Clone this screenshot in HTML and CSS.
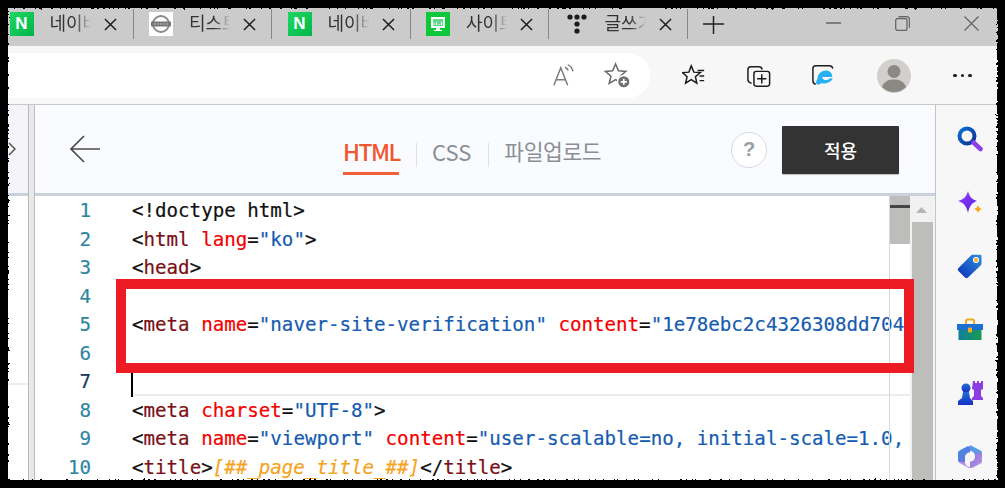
FILE: index.html
```html
<!doctype html>
<html lang="ko">
<head>
<meta charset="UTF-8">
<title>HTML editor</title>
<link rel="stylesheet" href="styles.css">
</head>
<body>
<svg class="defs" width="0" height="0" aria-hidden="true">
  <filter id="torn" x="-2%" y="-2%" width="104%" height="104%">
    <feTurbulence type="fractalNoise" baseFrequency="0.35" numOctaves="2" seed="4"/>
    <feDisplacementMap in="SourceGraphic" scale="5"/>
  </filter>
  <linearGradient id="mag" x1="0" y1="0" x2="1" y2="1"><stop offset="0" stop-color="#0a6fd8"/><stop offset="1" stop-color="#12308f"/></linearGradient>
  <linearGradient id="spark" x1="0" y1="0" x2="1" y2="1"><stop offset="0" stop-color="#a13cf5"/><stop offset="1" stop-color="#4a22e0"/></linearGradient>
  <linearGradient id="tag" x1="1" y1="0" x2="0" y2="1"><stop offset="0" stop-color="#2f8fe0"/><stop offset="1" stop-color="#0b2fb5"/></linearGradient>
  <linearGradient id="box" x1="0" y1="0" x2="1" y2="0"><stop offset="0" stop-color="#0f7f9a"/><stop offset="1" stop-color="#1c9a55"/></linearGradient>
  <linearGradient id="pawn" x1="0" y1="0" x2="0" y2="1"><stop offset="0" stop-color="#1f6fd0"/><stop offset="1" stop-color="#1a2fc8"/></linearGradient>
  <linearGradient id="cop1" x1="0" y1="0" x2="1" y2="1"><stop offset="0" stop-color="#3f8ee0"/><stop offset="1" stop-color="#6f6fe0"/></linearGradient>
  <linearGradient id="cop2" x1="0" y1="0" x2="1" y2="1"><stop offset="0" stop-color="#7d7be0"/><stop offset="1" stop-color="#c58be0"/></linearGradient>
</svg>
<div class="window">
  <div class="tabs">
    <div class="tab first">
      <span class="fav naver">N</span><span class="tab-title">네이버</span>
      <svg class="close" viewBox="0 0 14 14"><path d="M1 1l12 12M13 1L1 13"/></svg>
    </div>
    <div class="tab">
      <span class="fav plain"><svg viewBox="0 0 24 24" width="24" height="24"><circle cx="12" cy="12" r="8" fill="none" stroke="#8a8a8a" stroke-width="2"/><rect x="2" y="9.500" width="20" height="5" rx="1" fill="#777"/><path d="M5 12h14" stroke="#bbb" stroke-width="1" stroke-dasharray="2 1"/></svg></span><span class="tab-title">티스토리</span>
      <svg class="close" viewBox="0 0 14 14"><path d="M1 1l12 12M13 1L1 13"/></svg>
    </div>
    <div class="tab">
      <span class="fav naver">N</span><span class="tab-title">네이버</span>
      <svg class="close" viewBox="0 0 14 14"><path d="M1 1l12 12M13 1L1 13"/></svg>
    </div>
    <div class="tab">
      <span class="fav site"><svg viewBox="0 0 24 24" width="24" height="24"><rect x="5" y="5" width="14" height="11" fill="#fff"/><rect x="7" y="7" width="10" height="7" fill="#5fd98a"/><path d="M8 13v-2M10.500 13v-3M13 13v-1M15.500 13v-3" stroke="#fff" stroke-width="1"/><path d="M10 16h4v2h2v1H8v-1h2z" fill="#fff"/></svg></span><span class="tab-title">사이트</span>
      <svg class="close" viewBox="0 0 14 14"><path d="M1 1l12 12M13 1L1 13"/></svg>
    </div>
    <div class="tab">
      <span class="fav bare"><svg viewBox="0 0 24 24" width="24" height="24" fill="#1c1c1c"><circle cx="5" cy="5" r="2.600"/><circle cx="12" cy="5" r="2.600"/><circle cx="19" cy="5" r="2.600"/><circle cx="12" cy="12" r="2.600"/><circle cx="12" cy="19" r="2.600"/></svg></span><span class="tab-title">글쓰기</span>
      <svg class="close" viewBox="0 0 14 14"><path d="M1 1l12 12M13 1L1 13"/></svg>
    </div>
    <svg class="newtab" viewBox="0 0 21 18"><path d="M10.500 0v18M0 8h21"/></svg>
    <div class="winctl">
      <svg viewBox="0 0 15 15"><path d="M0 7h15"/></svg>
      <svg viewBox="0 0 15 15"><rect x=".7" y="2.500" width="11.300" height="12" rx="2"/><path d="M3.500.7h8a3 3 0 0 1 3 3v8"/></svg>
      <svg viewBox="0 0 15 15"><path d="M.5.500l14 14M14.500.500l-14 14"/></svg>
    </div>
  </div>
  <div class="toolbar">
    <div class="omnibox">
      <svg class="tool readaloud" viewBox="0 0 26 26"><path d="M2 23L9.500 4 17 23M4.800 17h9.500"/><path d="M14 3.500c2 .8 3 2 3.500 3.500M17 1c3 1 5 3.500 5.500 7"/></svg>
      <svg class="tool fav-add" viewBox="0 0 28 28"><path d="M12 2l3 7.200 7.600.6-5.800 5 1.800 7.500L12 18.300l-6.600 4 1.800-7.500-5.800-5 7.600-.6z"/><circle class="badge" cx="20.500" cy="20.500" r="6.500"/><path class="badge-plus" d="M20.500 17.300v6.400M17.300 20.500h6.400"/></svg>
    </div>
    <div class="tools">
      <svg class="tool favs" viewBox="0 0 26 26"><path d="M10 2l2.800 6.800 7 .5-5.300 4.500 1.600 7L10 17l-6.100 3.800 1.600-7L.5 9.300l7-.5z"/><path d="M17 7h7M19 13h5M19 18h5"/></svg>
      <svg class="tool colls" viewBox="0 0 26 26"><path d="M5 21C2 20 1 19 1 17V6c0-2 1-3 3-3h9c2 0 3 1 3.500 3"/><rect x="7.500" y="8" width="17" height="16" rx="2.500"/><path d="M16 11v10M11 16h10"/></svg>
      <svg class="tool ie" viewBox="0 0 26 26"><path d="M4 22c-2-.5-3-1.500-3-3.500V5c0-2 1-3 3-3h15c2 0 3 1 3.500 3"/><path class="ie-e" d="M6 16c0-5 4-9 9-9 4 0 7 2.500 7 7H11c.5 4 6 4.500 8.500 1.500h3c-2 5-8 6.500-12 5-1.500 1.500-5 2.500-6 .5-.5-1.500.5-3 1.500-5M11.500 11.500c1-2.500 6-2.500 7 0z"/></svg>
      <span class="avatar"><svg viewBox="0 0 34 34" width="34" height="34"><circle cx="17" cy="12.500" r="6.500" fill="#8c8984"/><path d="M5 28c2-6 7-7.500 12-7.500S27 22 29 28c-3 3-7 5-12 5S8 31 5 28z" fill="#8c8984"/></svg></span>
      <span class="more"><i></i><i></i><i></i></span>
    </div>
  </div>
  <div class="page">
    <aside class="left">
      <div class="left-head"><svg viewBox="0 0 8 14" width="8" height="14"><path d="M1 1l6 6-6 6"/></svg></div>
    </aside>
    <main class="editor">
      <header class="head">
        <svg class="back" viewBox="0 0 30 28"><path d="M30 14H1M14 1L1 14l13 13"/></svg>
        <nav class="modes">
          <a class="mode on">HTML</a><a class="mode">CSS</a><a class="mode upload">파일업로드</a>
        </nav>
        <span class="help">?</span>
        <button class="apply">적용</button>
      </header>
      <div class="body">
        <div class="code">
          <div class="line"><span class="num">1</span><span class="src">&lt;!doctype html&gt;</span></div>
          <div class="line"><span class="num">2</span><span class="src">&lt;<b>html</b> <u>lang</u>=<s>"ko"</s>&gt;</span></div>
          <div class="line"><span class="num">3</span><span class="src">&lt;<b>head</b>&gt;</span></div>
          <div class="line"><span class="num">4</span><span class="src"></span></div>
          <div class="line"><span class="num">5</span><span class="src">&lt;<b>meta</b> <u>name</u>=<s>"naver-site-verification"</s> <u>content</u>=<s>"1e78ebc2c4326308dd704f6a2b"</s></span></div>
          <div class="line"><span class="num">6</span><span class="src"></span></div>
          <div class="line current"><span class="num">7</span><span class="src"><em class="caret"></em></span></div>
          <div class="line"><span class="num">8</span><span class="src">&lt;<b>meta</b> <u>charset</u>=<s>"UTF-8"</s>&gt;</span></div>
          <div class="line"><span class="num">9</span><span class="src">&lt;<b>meta</b> <u>name</u>=<s>"viewport"</s> <u>content</u>=<s>"user-scalable=no, initial-scale=1.0, maximum-scale=1.0"</s>&gt;</span></div>
          <div class="line"><span class="num">10</span><span class="src">&lt;<b>title</b>&gt;<i>[##_page_title_##]</i>&lt;/<b>title</b>&gt;</span></div>
        </div>
        <div class="ruler"><span class="ruler-mark"></span></div>
        <div class="scroll"><span class="arrow"></span><span class="thumb"></span></div>
        <div class="callout"></div>
      </div>
    </main>
    <aside class="side">
      <svg viewBox="0 0 26 26"><circle cx="10" cy="10" r="7.500" fill="none" stroke="url(#mag)" stroke-width="4"/><path d="M16.500 16.500l7 6.500" stroke="#8a3fe8" stroke-width="4.500" stroke-linecap="round"/></svg>
      <svg viewBox="0 0 26 26"><path d="M11 1c1.500 6 3.500 8 9 10-5.500 2-7.500 5-9 12C9.500 16 7 13 1 11c6-2 8.500-4 10-10z" fill="url(#spark)"/><path d="M21 15c.5 2 1.500 3 4 4-2.500 1-3.500 2-4 4-.5-2-1.500-3-4-4 2.500-1 3.500-2 4-4z" fill="#f5a81c"/></svg>
      <svg viewBox="0 0 26 26"><path d="M1.500 15L14 2.500c.5-.5 1-.7 2-.7h7c1 0 1.500.5 1.500 1.500v7c0 1-.2 1.500-.7 2L11 24.500c-1 1-2 1-3 0L1.500 18c-1-1-1-2 0-3z" fill="url(#tag)"/><circle cx="19" cy="7" r="3" fill="#fff"/><circle cx="19" cy="7" r="2" fill="#f5b021"/></svg>
      <svg viewBox="0 0 26 26"><path d="M9 7V4c0-1 .5-1.500 1.500-1.500h5C16.500 2.500 17 3 17 4v3" fill="none" stroke="#f0a91e" stroke-width="2"/><path d="M0 7h26v6H0z" fill="#1b6fd0"/><path d="M1.500 13h23v10h-23z" fill="url(#box)"/><rect x="11" y="10.500" width="4" height="5" rx="1" fill="#f5a81c"/></svg>
      <svg viewBox="0 0 26 26"><path d="M16 1h2v2h2V1h2v2h2V1h2v8l-2 1v6l2 2v2H15v-2l2-2v-6l-2-1z" fill="#8c3fe0"/><circle cx="9" cy="8" r="4.500" fill="url(#pawn)"/><path d="M6 12h6l1 6 3 3v4H1v-4l4-3z" fill="url(#pawn)"/></svg>
      <svg viewBox="0 0 26 26"><path d="M13 1l4 2 6.500 3.500c1 .5 1.500 1.500 1.500 2.500v3h-7c0-3-2.500-5-5-5z" fill="#5a9ae8"/><path d="M1 9c0-1.500.5-2 1.500-2.500L10 2.500c1-.5 2-.5 3 0v6c-3 0-5 2-5 5v5l-5.500 0C1.500 18 1 17 1 16z" fill="url(#cop1)"/><path d="M25 9v8c0 1.500-.5 2-1.500 2.500L16 23.500c-1 .5-2 .5-3 0v-6c3 0 5-2 5-5V9z" fill="url(#cop2)"/><path d="M2 18l6 0c0 3 2.500 5 5 5l0 1.500-3-1.500-6.500-3.500z" fill="#b58ce8"/></svg>
    </aside>
  </div>
</div>
<div class="edge"></div>
</body>
</html>
```
FILE: styles.css
```css
* { box-sizing: border-box; }
html, body { margin: 0; height: 100%; }
body { background: #000; width: 1005px; height: 488px; overflow: hidden; position: relative; font-family: "Noto Sans CJK KR", "Noto Sans", sans-serif; }
.defs { position: absolute; }
.window { margin: 8px 7px 8px 8px; height: 472px; display: flex; flex-direction: column; overflow: hidden; background: #f7f7f7; border-top-right-radius: 4px; }
.edge { position: absolute; inset: 0; border: 8px solid #000; filter: url(#torn); pointer-events: none; }

.tabs { height: 38px; background: #cbcbcb; display: flex; align-items: flex-start; padding-top: 1px; flex: none; }
.tab { width: 138.5px; height: 30px; padding-left: 15.5px; display: flex; align-items: center; border-right: 1.5px solid #888; flex: none; }
.tab.first { width: 125.5px; padding-left: 1.5px; }
.fav { width: 24px; height: 24px; flex: none; display: block; }
.fav svg { display: block; }
.naver { background: linear-gradient(135deg, #1ed760, #00b64b); color: #fff; font: 900 17px/24px "Liberation Sans", sans-serif; text-align: center; }
.plain { background: #fff; }
.site { background: #0fc83a; }
.tab-title { width: 41px; margin-left: 16px; overflow: hidden; white-space: nowrap; font-size: 18px; line-height: 26px; color: #333; -webkit-mask-image: linear-gradient(90deg, #000 60%, transparent 100%); mask-image: linear-gradient(90deg, #000 60%, transparent 100%); flex: none; margin-top: -5px; }
.close { width: 13px; height: 13px; margin-left: 13px; flex: none; fill: none; stroke: #1c1c1c; stroke-width: 1.6; }
.newtab { width: 21px; height: 18px; margin-left: 15px; margin-top: 7px; flex: none; fill: none; stroke: #222; stroke-width: 1.5; }
.winctl { margin-left: auto; display: flex; gap: 54px; padding: 7px 19px 0 0; }
.winctl svg { width: 15px; height: 15px; fill: none; stroke: #666; stroke-width: 1.3; flex: none; }

.toolbar { height: 59px; flex: none; background: #f7f7f7; display: flex; align-items: center; border-bottom: 1px solid #c8c8c8; padding-top: 1px; }
.omnibox { width: 642px; height: 45px; background: #fff; border-radius: 0 22px 22px 0; display: flex; align-items: center; justify-content: flex-end; gap: 28px; padding-right: 19px; flex: none; }
.tool { width: 26px; height: 26px; fill: none; stroke: #1c1c1c; stroke-width: 1.6; flex: none; }
.readaloud { stroke: #7a7a7a; width: 24px; height: 24px; }
.fav-add { stroke: #6b6b6b; width: 27px; height: 27px; }
.badge { fill: #6f6f6f; stroke: #fff; stroke-width: 1.5; }
.badge-plus { stroke: #fff; stroke-width: 1.8; }
.tools { display: flex; align-items: center; padding-left: 32px; }
.favs { width: 24px; height: 24px; }
.colls { width: 24px; height: 24px; margin-left: 41px; }
.ie { width: 24px; height: 24px; margin-left: 41px; }
.ie-e { fill: #29b0f0; stroke: none; }
.avatar { width: 34px; height: 34px; border-radius: 50%; background: #d2d0cc; margin-left: 41px; overflow: hidden; flex: none; }
.avatar svg { display: block; }
.more { display: flex; gap: 4px; margin-left: 42px; }
.more i { width: 3.5px; height: 3.5px; border-radius: 50%; background: #222; }

.page { height: 375px; display: flex; flex: none; background: #fff; }
.left { width: 21px; flex: none; background: linear-gradient(#fff 278px, #eee 278px, #eee 280px, #fff 280px); border-right: 1px solid #b9b9b9; }
.left-head { height: 91px; background: #f4f5f8; border-bottom: 3px solid #c9d2dc; display: flex; align-items: center; }
.left-head svg { fill: none; stroke: #555; stroke-width: 1.5; }
.editor { width: 907px; flex: none; border-left: 5px solid #e9e9e9; border-right: 1px solid #c4c4c4; box-shadow: inset 1px 0 0 #bdbdbd; display: flex; flex-direction: column; }
.head { height: 91px; flex: none; background: #fafbfe; border-bottom: 3px solid #c9d2dc; display: flex; align-items: center; padding: 2px 36px 0 35px; margin-left: 1px; }
.back { width: 30px; height: 28px; fill: none; stroke: #4d4d4d; stroke-width: 1.7; flex: none; margin-top: -2px; }
.modes { display: flex; align-items: center; margin-left: 243px; padding-top: 4px; }
.mode { font-size: 22px; line-height: 32px; color: #8a8f96; padding: 0 0 3px; }
.mode + .mode { margin-left: 33px; position: relative; }
.mode + .mode::before { content: ""; position: absolute; left: -16.5px; top: 8.5px; height: 24px; width: 1.5px; background: #dfe1e5; }
.mode.on { color: #f0562f; font-size: 23px; font-weight: 500; border-bottom: 3px solid #f0603a; width: 56px; white-space: nowrap; letter-spacing: -1.6px; height: 45px; padding-top: 5px; }
.upload { font-size: 21.5px; letter-spacing: -.4px; }
.help { margin-left: auto; width: 36px; height: 36px; border-radius: 50%; background: #fff; border: 1.5px solid #d3d8e0; color: #9a9ea5; font: 700 20px/33px "Liberation Sans", sans-serif; text-align: center; flex: none; }
.apply { width: 117px; height: 48px; margin-left: 15px; background: #333; color: #fff; border: 0; border-radius: 1px; font: 500 18px "Noto Sans CJK KR", sans-serif; flex: none; box-shadow: 0 1px 1px rgba(0,0,0,.25); }

.body { flex: 1; display: flex; position: relative; min-height: 0; margin-left: 1px; background: #f3f3f3; }
.code { width: 875px; flex: none; overflow: hidden; font: 19.15px/28.55px "DejaVu Sans Mono", monospace; color: #111; padding-top: 1px; background: #fff; -webkit-text-stroke: .2px; }
.line { display: flex; height: 28.55px; white-space: nowrap; }
.num { width: 56px; text-align: right; color: #2f86a3; flex: none; }
.current .num { color: #17375e; }
.src { margin-left: 41px; flex: none; position: relative; }
.current .src { width: 778px; box-shadow: 0 2px 0 #ececec; height: 26px; }
.src b { font-weight: 400; color: #7a0f14; }
.src u { text-decoration: none; color: #f40000; }
.src s { text-decoration: none; color: #155bb0; }
.src i { color: #f5a41e; font-style: italic; }
.caret { position: absolute; left: -1px; top: 5px; width: 2px; height: 24px; background: #000; }
.ruler { position: absolute; left: 854px; top: 0; bottom: 0; width: 21px; border-left: 1px solid #d8d8d8; pointer-events: none; }
.ruler-mark { display: block; height: 48px; background: linear-gradient(#bdbdbc 9px, #444 9px, #444 12px, #bdbdbc 12px); }
.scroll { width: 23px; flex: none; background: #f1f1f1; display: flex; flex-direction: column; }
.arrow { height: 6px; width: 11px; flex: none; background: #b5b5b5; clip-path: polygon(50% 0, 100% 100%, 0 100%); margin: 11px auto 9px; }
.thumb { flex: 1; width: 21px; background: #bdbdbc; align-self: flex-end; }
.callout { position: absolute; left: 81px; top: 83px; width: 798px; height: 94px; border: 10px solid #ed1c24; pointer-events: none; }

.side { flex: 1; display: flex; flex-direction: column; align-items: center; gap: 37.5px; padding: 21px 0 0 6px; background: #f7f7f7; }
.side svg { width: 26px; height: 26px; flex: none; }
```
